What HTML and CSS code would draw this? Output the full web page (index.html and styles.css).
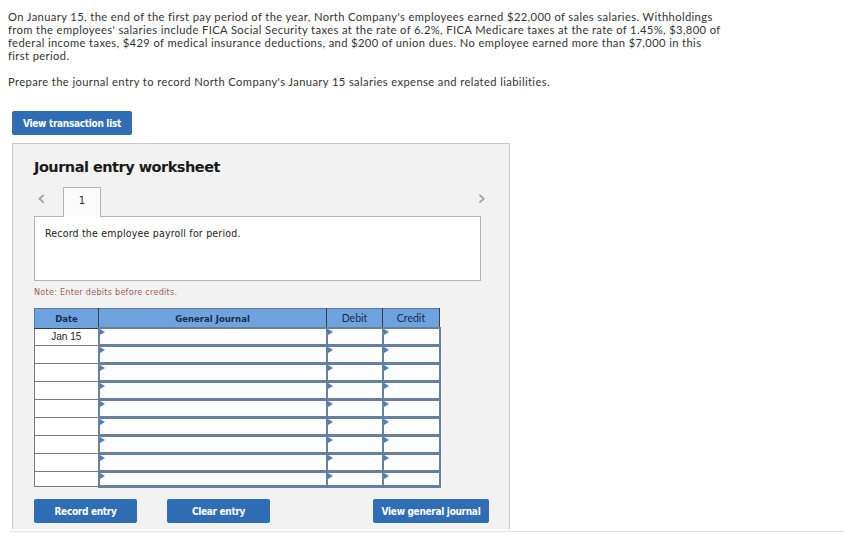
FILE: index.html
```html
<!DOCTYPE html>
<html>
<head>
<meta charset="utf-8">
<link rel="stylesheet" href="styles.css">
</head>
<body>
<div class="intro">
  <p class="q">On January 15, the end of the first pay period of the year, North Company's employees earned $22,000 of sales salaries. Withholdings from the employees' salaries include FICA Social Security taxes at the rate of 6.2%, FICA Medicare taxes at the rate of 1.45%, $3,800 of federal income taxes, $429 of medical insurance deductions, and $200 of union dues. No employee earned more than $7,000 in this first period.</p>
  <p class="q">Prepare the journal entry to record North Company's January 15 salaries expense and related liabilities.</p>
</div>
<button class="btn btn-list">View transaction list</button>
<div class="card">
  <h2 class="title">Journal entry worksheet</h2>
  <div class="tabs">
    <span class="chev">&lsaquo;</span>
    <span class="tab">1</span>
    <span class="chev chev-r">&rsaquo;</span>
  </div>
  <div class="desc">Record the employee payroll for period.</div>
  <div class="note">Note: Enter debits before credits.</div>
  <table class="jt">
    <thead>
      <tr><th class="c-date">Date</th><th class="c-gj">General Journal</th><th class="c-dr">Debit</th><th class="c-cr">Credit</th></tr>
    </thead>
    <tbody>
      <tr><td class="d">Jan 15</td><td class="f"></td><td class="f"></td><td class="f"></td></tr>
      <tr><td class="d"></td><td class="f"></td><td class="f"></td><td class="f"></td></tr>
      <tr><td class="d"></td><td class="f"></td><td class="f"></td><td class="f"></td></tr>
      <tr><td class="d"></td><td class="f"></td><td class="f"></td><td class="f"></td></tr>
      <tr><td class="d"></td><td class="f"></td><td class="f"></td><td class="f"></td></tr>
      <tr><td class="d"></td><td class="f"></td><td class="f"></td><td class="f"></td></tr>
      <tr><td class="d"></td><td class="f"></td><td class="f"></td><td class="f"></td></tr>
      <tr><td class="d"></td><td class="f"></td><td class="f"></td><td class="f"></td></tr>
      <tr class="last"><td class="d"></td><td class="f"></td><td class="f"></td><td class="f"></td></tr>
    </tbody>
  </table>
  <div class="actions">
    <button class="btn btn-rec">Record entry</button>
    <button class="btn btn-clr">Clear entry</button>
    <button class="btn btn-view">View general journal</button>
  </div>
</div>
<div class="sep"></div>
</body>
</html>
```

FILE: styles.css
```css
html, body {
  margin: 0;
  padding: 0;
  background: #ffffff;
}
body {
  font-family: "Lato", "Liberation Sans", sans-serif;
  color: #333333;
  overflow: hidden;
  height: 537px;
}
.intro {
  padding: 10px 8px 0 8px;
  width: 717px;
}
.q {
  margin: 0 0 13px 0;
  font-size: 11.2px;
  line-height: 13px;
  letter-spacing: 0.38px;
}
.btn {
  display: inline-block;
  border: none;
  border-radius: 2px;
  background: #2f6db5;
  color: #ffffff;
  font-family: "DejaVu Sans Condensed", "Liberation Sans", sans-serif;
  font-weight: bold;
  font-size: 10px;
  letter-spacing: -0.3px;
  height: 24px;
  padding: 0;
  cursor: pointer;
}
.btn-list {
  margin: 10px 0 0 12px;
  width: 120px;
}
.card {
  margin: 8px 0 0 12px;
  width: 498px;
  height: 386px;
  background: #f2f2f2;
  border: 1px solid #c8c8c8;
  border-bottom: none;
  padding: 0 0 0 21px;
  box-sizing: border-box;
  overflow: hidden;
}
.title {
  margin: 14px 0 0 0;
  font-family: "DejaVu Sans", Verdana, sans-serif;
  font-weight: bold;
  font-size: 14.5px;
  letter-spacing: -0.5px;
  line-height: 18px;
  color: #1a1a1a;
}
.tabs {
  display: flex;
  align-items: flex-end;
  margin-top: 10px;
  height: 30px;
  width: 454px;
}
.chev {
  font-family: "DejaVu Sans", sans-serif;
  color: #9a9a9a;
  font-size: 22px;
  line-height: 20px;
  width: 26px;
  padding-left: 3px;
  align-self: center;
  margin-top: -6px;
}
.chev-r {
  margin-left: auto;
  width: auto;
  padding: 0 2px 0 0;
}
.tab {
  box-sizing: border-box;
  width: 38px;
  height: 30px;
  background: #fbfbfb;
  border: 1px solid #b4b4b4;
  border-bottom: none;
  font-family: "DejaVu Sans", sans-serif;
  font-size: 10px;
  text-align: center;
  line-height: 26px;
  color: #222;
  position: relative;
  z-index: 1;
  margin-bottom: -1px;
}
.desc {
  box-sizing: border-box;
  width: 447px;
  height: 65px;
  background: #ffffff;
  border: 1px solid #b4b4b4;
  font-family: "DejaVu Sans Condensed", sans-serif;
  font-size: 10.5px;
  letter-spacing: 0.2px;
  color: #222;
  padding: 10px 0 0 10px;
}
.note {
  margin-top: 6px;
  font-family: "DejaVu Sans Condensed", sans-serif;
  font-size: 9px;
  letter-spacing: 0.25px;
  color: #a25a5f;
  line-height: 11px;
}
.jt {
  margin-top: 10px;
  border-collapse: collapse;
  width: 401px;
  table-layout: fixed;
}
.jt th {
  background: #6fa3e0;
  height: 18px;
  padding: 0;
  border: 1px solid #33404e;
  border-top-color: #5f7893;
  font-size: 10px;
  color: #1b2c46;
  font-weight: bold;
}
.jt th.c-date, .jt th.c-gj {
  font-family: "DejaVu Sans Condensed", sans-serif;
  font-size: 9.5px;
}
.jt th.c-dr, .jt th.c-cr {
  font-family: "Lato", sans-serif;
  font-weight: normal;
  font-size: 10.5px;
}
.jt th.c-date { border-left-color: #5f7893; }
.c-date { width: 63px; }
.c-gj { width: 227px; }
.c-dr { width: 55px; }
.c-cr { width: 56px; }
.jt td {
  height: 15px;
  padding: 0;
}
.jt td.d {
  background: #ffffff;
  border: 1px solid #7a7a7a;
  font-family: "Liberation Sans", sans-serif;
  font-size: 10px;
  color: #222;
  text-align: center;
  vertical-align: middle;
}
.jt td.f {
  position: relative;
  background: #fbfdff;
  border: 2px solid #6b7f96;
  border-bottom-width: 3px;
  border-bottom-color: #667f9e;
}
.jt td.f::before {
  content: "";
  position: absolute;
  left: 0;
  top: 0;
  border-left: 5px solid #4f7fc0;
  border-top: 3px solid transparent;
  border-bottom: 3px solid transparent;
}
.jt tr.last td { height: 12px; }
.actions {
  display: flex;
  margin-top: 11px;
  width: 455px;
}
.btn-rec, .btn-clr { width: 103px; }
.btn-clr { margin-left: 30px; }
.btn-view { width: 116px; margin-left: auto; }
.sep {
  margin: 2px 0 0 10px;
  height: 1px;
  background: #e4e4e4;
}
```
